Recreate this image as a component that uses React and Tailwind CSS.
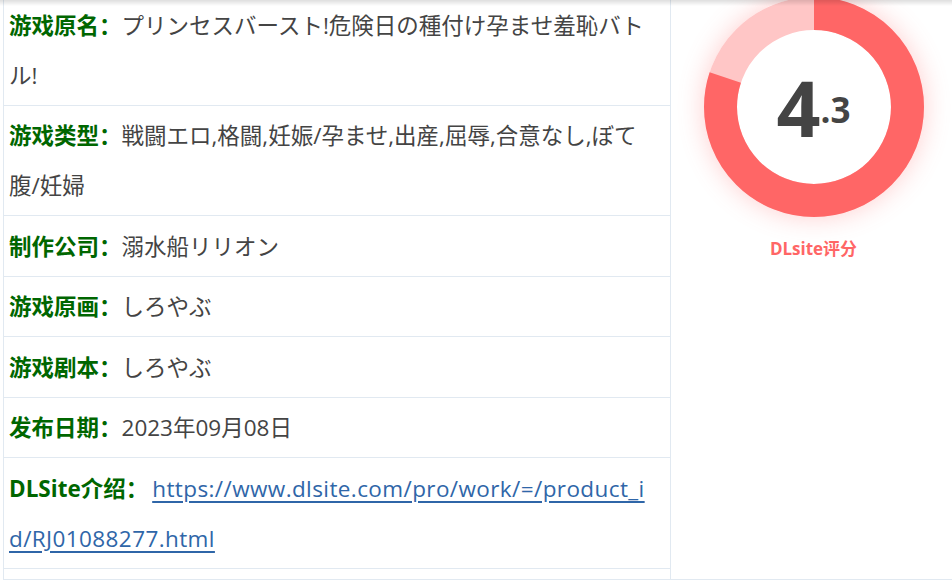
import React from "react";

const rows = [
  {
    label: "游戏原名：",
    value: "プリンセスバースト!危険日の種付け孕ませ羞恥バトル!",
  },
  {
    label: "游戏类型：",
    value: "戦闘エロ,格闘,妊娠/孕ませ,出産,屈辱,合意なし,ぼて腹/妊婦",
  },
  { label: "制作公司：", value: "溺水船リリオン" },
  { label: "游戏原画：", value: "しろやぶ" },
  { label: "游戏剧本：", value: "しろやぶ" },
  { label: "发布日期：", value: "2023年09月08日" },
  {
    label: "DLSite介绍：",
    link: "https://www.dlsite.com/pro/work/=/product_id/RJ01088277.html",
  },
];

const Score = ({ score = 4.3 }) => {
  const r = 93.5;
  const c = 2 * Math.PI * r;
  const filled = c * 0.8;
  const [whole, frac] = score.toFixed(1).split(".");

  return (
    <div className="relative mt-[2px] h-[220px] w-[220px] rounded-full shadow-[0_0_26px_rgba(255,102,102,0.32)]">
      <svg width="220" height="220" viewBox="0 0 220 220">
        <circle cx="110" cy="110" r={r} fill="none" stroke="#ffc6c6" strokeWidth="33" />
        <circle
          cx="110"
          cy="110"
          r={r}
          fill="none"
          stroke="#ff6666"
          strokeWidth="33"
          strokeDasharray={`${filled} ${c}`}
          transform="rotate(-90 110 110)"
        />
      </svg>
      {/* number in the middle */}
      <div className="absolute inset-0 flex items-center justify-center font-['Open_Sans',sans-serif] font-bold text-[#444]">
        <span className="text-[77px] leading-none">{whole}</span>
        <span className="mt-[4px] text-[35px] leading-none">.{frac}</span>
      </div>
    </div>
  );
};

export default function App() {
  return (
    <div className="relative h-[582px] w-full overflow-hidden bg-white font-['Open_Sans','Noto_Sans_CJK_SC',sans-serif]">
      {/* header shadow */}
      <div className="absolute inset-x-0 top-0 z-10 h-[6px] bg-gradient-to-b from-[rgba(0,0,0,0.13)] to-transparent" />

      <div className="ml-[3px] -mt-[5px] flex w-[956px] border-b border-l border-[#e1e9f1]">
        {/* info */}
        <div className="w-[666px] shrink-0 pb-[10px]">
          {rows.map((row) => (
            <div
              key={row.label}
              className="border-b border-[#e1e9f1] pt-[5.5px] pb-[4px] pl-[5px] pr-[20px] text-[22.5px] leading-[50px] text-[#444] [word-break:break-all]"
            >
              <span className="font-bold text-[#006600]">{row.label}</span>
              {row.link ? (
                <a
                  href={row.link}
                  className="ml-[4px] text-[#2f66a8] underline underline-offset-[4px] tracking-[0.4px]"
                >
                  {row.link}
                </a>
              ) : (
                row.value
              )}
            </div>
          ))}
        </div>

        {/* rating */}
        <div className="flex w-[286px] flex-col items-center border-l border-[#e1e9f1]">
          <Score score={4.3} />
          <div className="mt-[19px] text-[17px] font-bold text-[#ff6666]">DLsite评分</div>
        </div>
      </div>
    </div>
  );
}
